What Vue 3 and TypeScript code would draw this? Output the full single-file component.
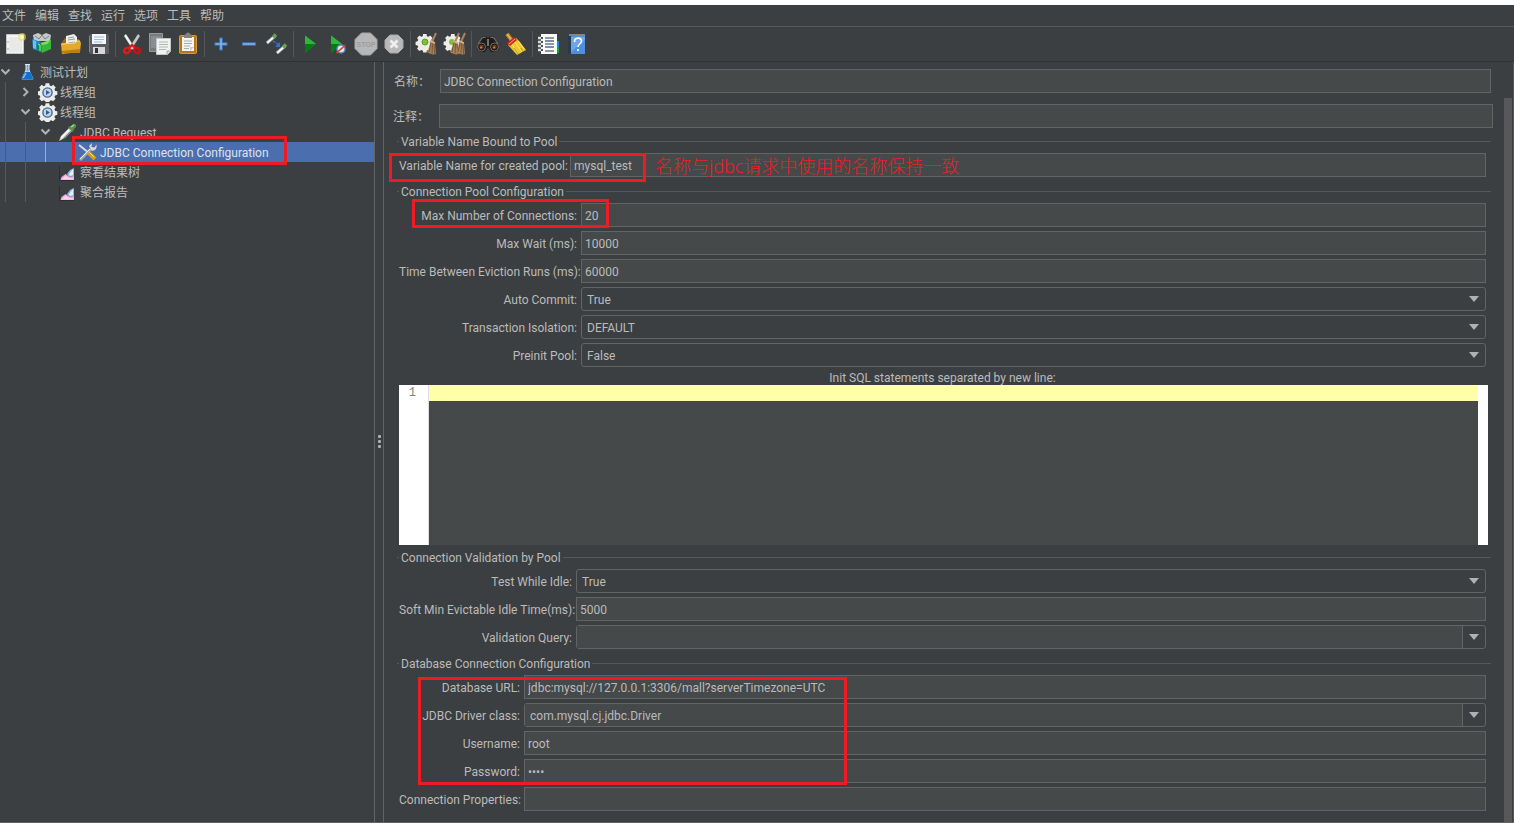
<script setup lang="ts">
import { reactive, ref } from 'vue'

interface Tool { name: string; art: string }
interface TreeRow { label: string; level: number; icon: string; open?: boolean; closed?: boolean }
interface Field { id: string; label: string; kind: 'text' | 'select' | 'combo' | 'password'; value: string; options?: string[] }

const menus = ['文件', '编辑', '查找', '运行', '选项', '工具', '帮助']

const gear = '<path fill="#ecece9" d="M8.500 2.500h4l.5 2.500 1.800.8 2.100-1.500 2.800 2.900-1.400 2.100.8 1.700 2.400.5v3.900l-2.500.6-.8 1.700 1.400 2.100-2.800 2.800-2.100-1.300-1.700.8-.5 2.200H8.600l-.6-2.200-1.800-.8-2.100 1.300-2.800-2.800 1.400-2.100-.8-1.700-2.400-.6v-3.900l2.400-.5.8-1.700-1.400-2.100 2.800-2.900L6.200 5.800 8 5z"/>'
const brush = (x: number) =>
  `<g transform="translate(${x} 0)"><path d="M18 3l-4 9" stroke="#a9835a" stroke-width="2"/><path d="M12 11l5 2 1 11c-3 1-6 0-9-2 2-3 3-7 3-11z" fill="#a88158"/><path d="M13 13l-2 9M14.500 13.500l-.5 10M16 14l.7 10" stroke="#6b4d2e" stroke-width=".8"/><path d="M12 11l5 2" stroke="#d4b48a" stroke-width="1.500"/></g>`

const toolGroups: Tool[][] = [
  [
    { name: 'New', art: '<path d="M5.500 4.500h17v19h-17z" fill="#f4f4f3" stroke="#c6c6c3"/><path d="M8 7h13v15H8z" fill="#e9e9e7"/><path d="M7 11v2m0 5v2" stroke="#aaa"/><circle cx="21" cy="7" r="4" fill="#efe05a" opacity=".6"/><circle cx="21" cy="7" r="2" fill="#fff9b8"/>' },
    { name: 'Templates', art: '<path d="M4 5l5-2 4 2 4-2 5 2-1 6H5z" fill="#c5c9c8"/><path d="M6 6l4 3 3-4 3 4 4-3" stroke="#77817f" fill="none"/><path d="M3 9l9 3v10l-8-3z" fill="#2087c9"/><path d="M4 10l3 1v8l-3-1z" fill="#66c4ee"/><path d="M8 14l5-2v11l-5-3z" fill="#138c42"/><path d="M12 13l10-3v9l-9 4z" fill="#35b83a"/><path d="M12 13l10-3-4 4-5 1z" fill="#82de60"/><path d="M9 14l2 1v6" stroke="#a7ef9e" fill="none"/>' },
    { name: 'Open', art: '<path d="M5 12l3-4 14 1 1 14H6z" fill="#9e6510"/><path d="M9 6l8-2 3 3v8H9z" fill="#f0f0ee"/><path d="M11 8l6-1m-6 3l7-1m-7 4l7-1" stroke="#999"/><path d="M4 14l14-1 2-2h3l1 2-1 9-18 2z" fill="#e5a82f"/><path d="M4 14l14-1 2-2h3" fill="none" stroke="#ffdc79"/><path d="M5 21l18-2v4H5z" fill="#bd7c16"/>' },
    { name: 'Save', art: '<path d="M5 4h18l1 2v18H5l-1-2V6z" fill="#5a5c60"/><path d="M4.500 22V6" stroke="#888"/><path d="M7 4h14v10H7z" fill="#f3f7fc"/><path d="M9 7h10M9 9.500h10M9 12h8" stroke="#9dbbe0" stroke-width="1.200"/><path d="M8 17h12v7H8z" fill="#d7d7d7"/><path d="M10 18h3v5h-3z" fill="#333"/>' }
  ],
  [
    { name: 'Cut', art: '<path d="M8 4l9 14-2 2L6 6z" fill="#e4e4e0"/><path d="M20 4l-9 14 2 2 9-14z" fill="#c5c7c4"/><path d="M7 5l7 11" stroke="#fff"/><ellipse cx="9" cy="20.500" rx="3" ry="2.400" fill="none" stroke="#e01919" stroke-width="2.300" transform="rotate(-28 9 20.500)"/><ellipse cx="19" cy="20.500" rx="3" ry="2.400" fill="none" stroke="#d40d10" stroke-width="2.300" transform="rotate(28 19 20.500)"/><path d="M11 18l3-3 3 3" stroke="#e01919" stroke-width="2.400" fill="none"/>' },
    { name: 'Copy', art: '<path d="M3.500 3.500h13v18h-13z" fill="#777b7d" stroke="#999"/><path d="M5 6h10v12H5z" fill="#8b8e90"/><path d="M10.500 8.500h14v13l-3 3h-11z" fill="#f2f2f0" stroke="#c6c6c4"/><path d="M13 12h9M13 14.500h9M13 17h9M13 19.500h7" stroke="#b6b6b4"/><path d="M21 24v-3h3" fill="#ccc" stroke="#aaa"/>' },
    { name: 'Paste', art: '<rect x="5.500" y="5.500" width="17" height="18" rx="1" fill="#b87617" stroke="#d29a42"/><path d="M8 7h12v14H8z" fill="#f5f5f3"/><path d="M10 5l2-1c1-2 3-2 4 0l2 1v3h-8z" fill="#83847d"/><path d="M10 11h8m-8 2.500h8m-8 2.500h6m-6 2.500h5" stroke="#aaa"/><path d="M16 21v-4h4" fill="#ccc"/>' }
  ],
  [
    { name: 'Expand all', art: '<path d="M14 7.500v13M7.500 14h13" stroke="#3b73be" stroke-width="3.600"/><path d="M14 8.500v11M8.500 14h11" stroke="#86b4ea" stroke-width="1.600"/>' },
    { name: 'Collapse all', art: '<path d="M7 14h14" stroke="#3b73be" stroke-width="3.600"/><path d="M8 14h12" stroke="#86b4ea" stroke-width="1.600"/>' },
    { name: 'Toggle', art: '<path d="M4 13l8-7M14 23l8-7" stroke="#b5bab7" stroke-width="3"/><path d="M4 13l8-7M14 23l8-7" stroke="#fff" stroke-width="1.300"/><path d="M10 7.500l3-3M20 17.500l3-3" stroke="#6a9d56" stroke-width="3.600"/><path d="M10 11l6 4" stroke="#2d74d6" stroke-width="1.500" stroke-dasharray="3 1"/><path d="M17 12v5h-5z" fill="#2d74d6"/>' }
  ],
  [
    { name: 'Start', art: '<path d="M9 5.500L20 14 9 23z" fill="#12a021"/><path d="M9 5.500L20 14H9z" fill="#31b53b"/><path d="M9 23L20 14H9z" fill="#087914"/>' },
    { name: 'Start no pauses', art: '<path d="M7 5.500L18 14 7 23z" fill="#12a021"/><path d="M7 5.500L18 14H7z" fill="#31b53b"/><path d="M7 23L18 14H7z" fill="#087914"/><circle cx="17" cy="19" r="4" fill="#dce8ee" stroke="#598ac1" stroke-width="1.400"/><path d="M12.500 23l9-8" stroke="#e23a2d" stroke-width="1.600"/>' },
    { name: 'Stop', art: '<path d="M9.500 3h9l6.500 6.500v9L18.500 25h-9L3 18.500v-9z" fill="#b7b7b7" stroke="#a6a6a6"/><text x="14" y="17" text-anchor="middle" font-family="Liberation Sans, sans-serif" font-size="7" font-weight="700" fill="#9c9c9c">STOP</text>' },
    { name: 'Shutdown', art: '<path d="M10 5h8l5 5v8l-5 5h-8l-5-5v-8z" fill="#b9b9b9" stroke="#a9a9a9"/><path d="M10.500 10.500l7 7m0-7l-7 7" stroke="#eee" stroke-width="2.800"/>' }
  ],
  [
    { name: 'Clear', art: `<g transform="translate(3 2) scale(.84)">${gear}</g><circle cx="12" cy="12" r="3" fill="#83bd35" stroke="#5f9a2c"/>${brush(5)}` },
    { name: 'Clear all', art: `<g transform="translate(3 2) scale(.84)">${gear}</g><circle cx="11" cy="12" r="3" fill="#83bd35"/>${brush(0)}${brush(6)}` }
  ],
  [
    { name: 'Search', art: '<path d="M8 7l4-1 2 2 2-2 4 1 5 8 0 5-4 2h-4l-3-5-3 5H7l-4-2 0-5z" fill="#1f1d1b"/><path d="M4 14l4-6 4-1m4 0l4 1 4 6" stroke="#77726e" stroke-width="1.200"/><path d="M13 9h2v7h-2z" fill="#77726e"/><circle cx="7.500" cy="17" r="4" fill="#171717" stroke="#77706a"/><circle cx="20.500" cy="17" r="4" fill="#171717" stroke="#77706a"/><circle cx="7.500" cy="17" r="2.200" fill="#74401f"/><circle cx="20.500" cy="17" r="2.200" fill="#74401f"/><path d="M6 18l2-1m11 1l2-1" stroke="#e09a62"/>' },
    { name: 'Reset search', art: '<path d="M5 4l6 8" stroke="#b77e25" stroke-width="4"/><path d="M5 4l6 8" stroke="#e6bb60" stroke-width="1.500"/><path d="M6 15l8-7 4 4 6 8-9 5z" fill="#e9c72d"/><path d="M10 14l5 9m-2-11l7 10m-4-11l6 8" stroke="#fff07b" stroke-width=".8"/><path d="M5 13l7-6 3 3-7 6z" fill="#d72618"/><path d="M7 14l6-5" stroke="#f4a08f"/><path d="M12 18l4 6m3-6l2 4" stroke="#a88312" stroke-width=".7"/>' }
  ],
  [
    { name: 'Function helper', art: '<path d="M18 11h6v6h-6z" fill="#1686e8"/><path d="M18 17h6v6h-6z" fill="#11a927"/><path d="M6 4h16v20H6z" fill="#fafafa"/><path d="M10 8h9m-9 3h9m-9 3h9m-9 3h9m-9 4h9" stroke="#2d3845"/><path d="M10 11h9m-9 6h9" stroke="#5b86c5"/><path d="M3 8h5m-5 4h5m-5 4h5m-5 4h5" stroke="#ddd" stroke-width="2.300"/><path d="M6 8h2m-2 4h2m-2 4h2m-2 4h2" stroke="#222" stroke-width="1.500"/>' },
    { name: 'Help', art: '<path d="M5 6l3-2h14v19l-3 1H5z" fill="#263a50"/><path d="M8 6h14v18H8z" fill="#508fdc"/><path d="M6 5h16" stroke="#d0d6dd"/><path d="M8 7h14v3L8 22z" fill="#6ca5eb"/><path d="M11.500 12c0-5 7-5 7-1 0 3-3.500 3-3.500 6m0 2v2" stroke="#fff" stroke-width="1.600" fill="none"/>' }
  ]
]

const treeIcons: Record<string, string> = {
  plan: '<path d="M7 2.500h5M8 3v5L4 17h11L11 8V3" fill="#b9cfe3" stroke="#dfe9f1"/><path d="M6.500 10h6l3 7.500h-12z" fill="#1470cc"/><path d="M8 11l-3 5" stroke="#77bbf7" stroke-width="1.500"/><path d="M9.500 3v6" stroke="#6f9ac4" stroke-width="1.500"/>',
  gear: `<g transform="translate(0 -1) scale(.9)">${gear}</g><circle cx="9.500" cy="10.500" r="4.600" fill="#c3d3e8" stroke="#49698f" stroke-width="1.400"/><path d="M8 8l4 2.500L8 13z" fill="#2f62a3"/>`,
  dropper: '<path d="M1 19l2-5 8-8 3 3-7 7z" fill="#cfd4d2"/><path d="M3 16l8-8" stroke="#fff" stroke-width="1.500"/><path d="M5 17l8-8" stroke="#7c8582"/><path d="M10 5l5 5 1-3 2-2c1-2-1-4-3-3l-2 2z" fill="#559444"/><path d="M13 5l3-2" stroke="#a5d993" stroke-width="1.500"/>',
  tools: '<path d="M1 3l10 8" stroke="#d8dddd" stroke-width="2"/><path d="M11 11l6 6" stroke="#db9f16" stroke-width="4"/><path d="M11 10l5 5" stroke="#ffe05f"/><path d="M2 18L13 7" stroke="#a9aaa5" stroke-width="3"/><path d="M2 17L12 7" stroke="#efefec"/><path d="M11 4l3-3-.5 4 3 .5 2-3c1 4-2 7-5 6z" fill="#d8dad6"/>',
  chart: '<path d="M1.500 4v14.500H16" stroke="#2c2e30" fill="none"/><path d="M2.500 18l1-3 4-3 3 2 3 1 2.500-2v5z" fill="#f0a6d6"/><path d="M3.500 17.500l4-4 3 2 5 1v1z" fill="#ffd2ef"/><path d="M16 6v8l-3 1-3-1-1-2 3-4z" fill="#8cb7e5"/><path d="M15 7v6l-3 1-1-2z" fill="#e2f2ff"/>'
}

const tree: TreeRow[] = [
  { label: '测试计划', level: 0, icon: 'plan', open: true },
  { label: '线程组', level: 1, icon: 'gear', closed: true },
  { label: '线程组', level: 1, icon: 'gear', open: true },
  { label: 'JDBC Request', level: 2, icon: 'dropper', open: true },
  { label: 'JDBC Connection Configuration', level: 3, icon: 'tools' },
  { label: '察看结果树', level: 2, icon: 'chart' },
  { label: '聚合报告', level: 2, icon: 'chart' }
]
const selected = ref(4)

const name = ref('JDBC Connection Configuration')
const comment = ref('')
const sql = ref('')

const bound = reactive<Field[]>([
  { id: 'pool-name', label: 'Variable Name for created pool:', kind: 'text', value: 'mysql_test' }
])
const pool = reactive<Field[]>([
  { id: 'max-conn', label: 'Max Number of Connections:', kind: 'text', value: '20' },
  { id: 'max-wait', label: 'Max Wait (ms):', kind: 'text', value: '10000' },
  { id: 'eviction', label: 'Time Between Eviction Runs (ms):', kind: 'text', value: '60000' },
  { id: 'commit', label: 'Auto Commit:', kind: 'select', value: 'True', options: ['True', 'False'] },
  { id: 'isolation', label: 'Transaction Isolation:', kind: 'select', value: 'DEFAULT', options: ['DEFAULT'] },
  { id: 'preinit', label: 'Preinit Pool:', kind: 'select', value: 'False', options: ['True', 'False'] }
])
const validation = reactive<Field[]>([
  { id: 'idle', label: 'Test While Idle:', kind: 'select', value: 'True', options: ['True', 'False'] },
  { id: 'soft-min', label: 'Soft Min Evictable Idle Time(ms):', kind: 'text', value: '5000' },
  { id: 'query', label: 'Validation Query:', kind: 'combo', value: '' }
])
const database = reactive<Field[]>([
  { id: 'url', label: 'Database URL:', kind: 'text', value: 'jdbc:mysql://127.0.0.1:3306/mall?serverTimezone=UTC' },
  { id: 'driver', label: 'JDBC Driver class:', kind: 'combo', value: 'com.mysql.cj.jdbc.Driver' },
  { id: 'user', label: 'Username:', kind: 'text', value: 'root' },
  { id: 'password', label: 'Password:', kind: 'password', value: 'root' },
  { id: 'props', label: 'Connection Properties:', kind: 'text', value: '' }
])
const sections = [
  { key: 'bound', title: 'Variable Name Bound to Pool', fields: bound },
  { key: 'pool', title: 'Connection Pool Configuration', fields: pool },
  { key: 'validation', title: 'Connection Validation by Pool', fields: validation },
  { key: 'database', title: 'Database Connection Configuration', fields: database }
]
</script>

<template>
  <div class="app">
    <nav class="menubar">
      <button v-for="m in menus" :key="m" type="button">{{ m }}</button>
    </nav>

    <div class="toolbar" role="toolbar">
      <template v-for="(group, gi) in toolGroups" :key="gi">
        <span v-if="gi > 0" class="divider"></span>
        <button v-for="t in group" :key="t.name" type="button" :aria-label="t.name">
          <svg viewBox="0 0 28 28" width="28" height="28" fill="none" v-html="t.art"></svg>
        </button>
      </template>
    </div>

    <div class="body">
      <aside class="sidebar">
        <ul class="tree">
          <li v-for="(row, i) in tree" :key="i">
            <button type="button" class="row" :class="{ selected: selected === i }" @click="selected = i">
              <span v-for="n in row.level" :key="n" class="guide" :class="{ near: n === 3 }"></span>
              <svg class="chevron" viewBox="0 0 18 20" width="18" height="20" fill="none" stroke="#afb1b3" stroke-width="2">
                <path v-if="row.open" d="M1.500 7.500l4 4 4-4" />
                <path v-else-if="row.closed" d="M3.500 6l4 4-4 4" />
              </svg>
              <svg class="node" viewBox="0 0 20 20" width="20" height="20" fill="none" v-html="treeIcons[row.icon]"></svg>
              <span class="caption">{{ row.label }}</span>
            </button>
          </li>
        </ul>
      </aside>

      <div class="splitter"><i></i><i></i><i></i></div>

      <main class="panel">
        <div class="name-row">
          <label for="name">名称：</label>
          <input id="name" v-model="name" class="box" type="text" />
        </div>
        <div class="scroller">
          <div class="content">
            <div class="comment-row">
              <label for="comment">注释：</label>
              <input id="comment" v-model="comment" class="box" type="text" />
            </div>

            <section v-for="s in sections" :key="s.key" :class="['group', s.key]">
              <h2><span>{{ s.title }}</span></h2>
              <div v-for="f in s.fields" :key="f.id" class="field">
                <label :for="f.id">{{ f.label }}</label>
                <div v-if="f.kind === 'select'" class="select">
                  <select :id="f.id" v-model="f.value">
                    <option v-for="o in f.options" :key="o">{{ o }}</option>
                  </select>
                  <svg viewBox="0 0 10 6" width="10" height="6"><path d="M0 0h10L5 6z" fill="#afb1b3" /></svg>
                </div>
                <div v-else-if="f.kind === 'combo'" class="combo">
                  <input :id="f.id" v-model="f.value" type="text" />
                  <button type="button" :aria-label="f.label + ' options'">
                    <svg viewBox="0 0 10 6" width="10" height="6"><path d="M0 0h10L5 6z" fill="#afb1b3" /></svg>
                  </button>
                </div>
                <input v-else :id="f.id" v-model="f.value" class="box" :class="f.kind" :type="f.kind" />
              </div>
              <template v-if="s.key === 'pool'">
                <label class="sql-label" for="sql">Init SQL statements separated by new line:</label>
                <div class="editor">
                  <span class="gutter">1</span>
                  <textarea id="sql" v-model="sql" spellcheck="false"></textarea>
                </div>
              </template>
            </section>
          </div>
          <div class="scrollbar"></div>
        </div>
      </main>
    </div>

    <div class="mark mark-tree"></div>
    <div class="mark mark-variable"></div>
    <div class="mark mark-max"></div>
    <div class="mark mark-database"></div>
    <p class="note">名称与jdbc请求中使用的名称保持一致</p>
  </div>
</template>

<style>
body {
  background: #3c3f41;
}
</style>

<style scoped>
.app {
  position: relative;
  display: flex;
  flex-direction: column;
  box-sizing: border-box;
  min-height: 100vh;
  border-top: 5px solid #fff;
  border-bottom: 1px solid #616365;
  background: #3c3f41;
  color: #bbb;
  font: 12px/16px Roboto, "Noto Sans CJK SC", sans-serif;
}
button, input, select, textarea {
  box-sizing: border-box;
  margin: 0;
  padding: 0;
  border: 0;
  border-radius: 0;
  outline: 0;
  background: none;
  color: inherit;
  font: inherit;
}
.menubar {
  display: flex;
  gap: 9px;
  height: 21px;
  padding-left: 2px;
  border-bottom: 1px solid #555759;
}
.menubar button {
  padding-top: 1px;
}
.toolbar {
  display: flex;
  align-items: center;
  height: 34px;
  padding-left: 1px;
  border-bottom: 1px solid #303234;
}
.toolbar button, .toolbar svg {
  display: block;
  width: 28px;
  height: 28px;
}
.divider {
  width: 1px;
  height: 26px;
  margin: 0 2px;
  background: #555759;
}
.body {
  display: flex;
  flex: 1;
}
.sidebar {
  width: 374px;
  border-right: 1px solid #616365;
}
.tree {
  margin: 0;
  padding: 0;
  list-style: none;
}
.row {
  display: flex;
  align-items: center;
  width: 100%;
  height: 20px;
  text-align: left;
}
.row.selected {
  background: #4b6eaf;
}
.guide {
  box-sizing: border-box;
  width: 20px;
  height: 20px;
  padding-left: 5px;
}
.guide::before {
  display: block;
  width: 1px;
  height: 20px;
  background: #555a5f;
  content: "";
}
.guide.near::before {
  background: #7fb4f5;
}
.caption {
  padding: 2px 0 0 2px;
  white-space: nowrap;
}
.selected .caption {
  color: #dfe3ea;
}
.splitter {
  display: flex;
  flex-direction: column;
  align-items: center;
  justify-content: center;
  gap: 2px;
  box-sizing: border-box;
  width: 9px;
  padding-bottom: 2px;
  border-right: 1px solid #616365;
}
.splitter i {
  width: 3px;
  height: 3px;
  border-radius: 1px;
  background: #afb1b3;
}
.panel {
  display: flex;
  flex: 1;
  flex-direction: column;
  padding-right: 1px;
  border-right: 1px solid #555759;
}
.name-row, .comment-row {
  display: flex;
  align-items: center;
}
.name-row {
  height: 24px;
  padding: 7px 21px 5px 10px;
}
.comment-row {
  padding: 6px 11px 0 9px;
}
.name-row label, .comment-row label {
  width: 46px;
  padding-top: 2px;
}
.scroller {
  display: flex;
  flex: 1;
}
.content {
  flex: 1;
}
.scrollbar {
  width: 8px;
  background: #58585a;
}
.box {
  flex: 1;
  height: 24px;
  padding: 2px 3px 0;
  border: 1px solid #646464;
  background: #45494a;
}
.group {
  display: flex;
  flex-direction: column;
  margin-right: 18px;
  padding-left: 15px;
}
.bound {
  padding-top: 1px;
}
.pool, .database {
  padding-top: 2px;
}
h2 {
  display: flex;
  align-items: center;
  gap: 2px;
  height: 24px;
  margin: 0 -5px 0 -2px;
  font: inherit;
}
h2 span {
  padding-top: 1px;
}
h2::before, h2::after {
  width: 2px;
  height: 1px;
  background: #555759;
  content: "";
}
h2::after {
  flex: 1;
}
.field {
  display: flex;
  align-items: center;
  gap: 4px;
  height: 24px;
}
.field + .field {
  margin-top: 4px;
}
.field label {
  padding-top: 1px;
  text-align: right;
  white-space: nowrap;
}
.bound label { width: 167px; }
.pool .field label { width: 178px; }
.validation label { width: 173px; }
.database label { width: 121px; }
.select, .combo {
  display: flex;
  flex: 1;
  box-sizing: border-box;
  height: 24px;
  border: 1px solid #646464;
  border-radius: 3px;
}
.select {
  display: grid;
  align-items: center;
}
.select select, .select svg {
  grid-area: 1 / 1;
}
.select select {
  width: 100%;
  height: 22px;
  padding: 1px 0 0 5px;
  appearance: none;
}
.select svg {
  justify-self: end;
  margin-right: 6px;
  pointer-events: none;
}
.combo input {
  flex: 1;
  padding: 1px 0 0 5px;
  background: #45494a;
}
.combo button {
  display: flex;
  align-items: center;
  justify-content: center;
  width: 23px;
  border-left: 1px solid #646464;
}
.sql-label {
  height: 15px;
  padding-top: 3px;
  text-align: center;
}
.editor {
  display: flex;
  height: 160px;
  margin-right: -2px;
  background: #fff;
}
.gutter {
  box-sizing: border-box;
  width: 30px;
  padding-right: 12px;
  border-right: 1px solid #ddd;
  color: #808080;
  font: 12px/16px "Liberation Mono", monospace;
  text-align: right;
}
.editor textarea {
  flex: 1;
  margin-right: 10px;
  background: linear-gradient(#ffffaa 16px, #45494a 16px);
  color: #222;
  font: 12px/16px "Liberation Mono", monospace;
  resize: none;
}
.mark {
  position: absolute;
  box-sizing: border-box;
  border: 3px solid #ed1c24;
  pointer-events: none;
}
.mark-tree { left: 72px; top: 131px; width: 215px; height: 29px; }
.mark-variable { left: 389px; top: 148px; width: 257px; height: 29px; }
.mark-max { left: 412px; top: 194px; width: 197px; height: 29px; }
.mark-database { left: 418px; top: 672px; width: 429px; height: 108px; }
.note {
  position: absolute;
  left: 655px;
  top: 148px;
  margin: 0;
  color: #ed1c24;
  font: 300 18px/26px "Noto Sans", "Noto Sans CJK SC", sans-serif;
  white-space: nowrap;
}
</style>
